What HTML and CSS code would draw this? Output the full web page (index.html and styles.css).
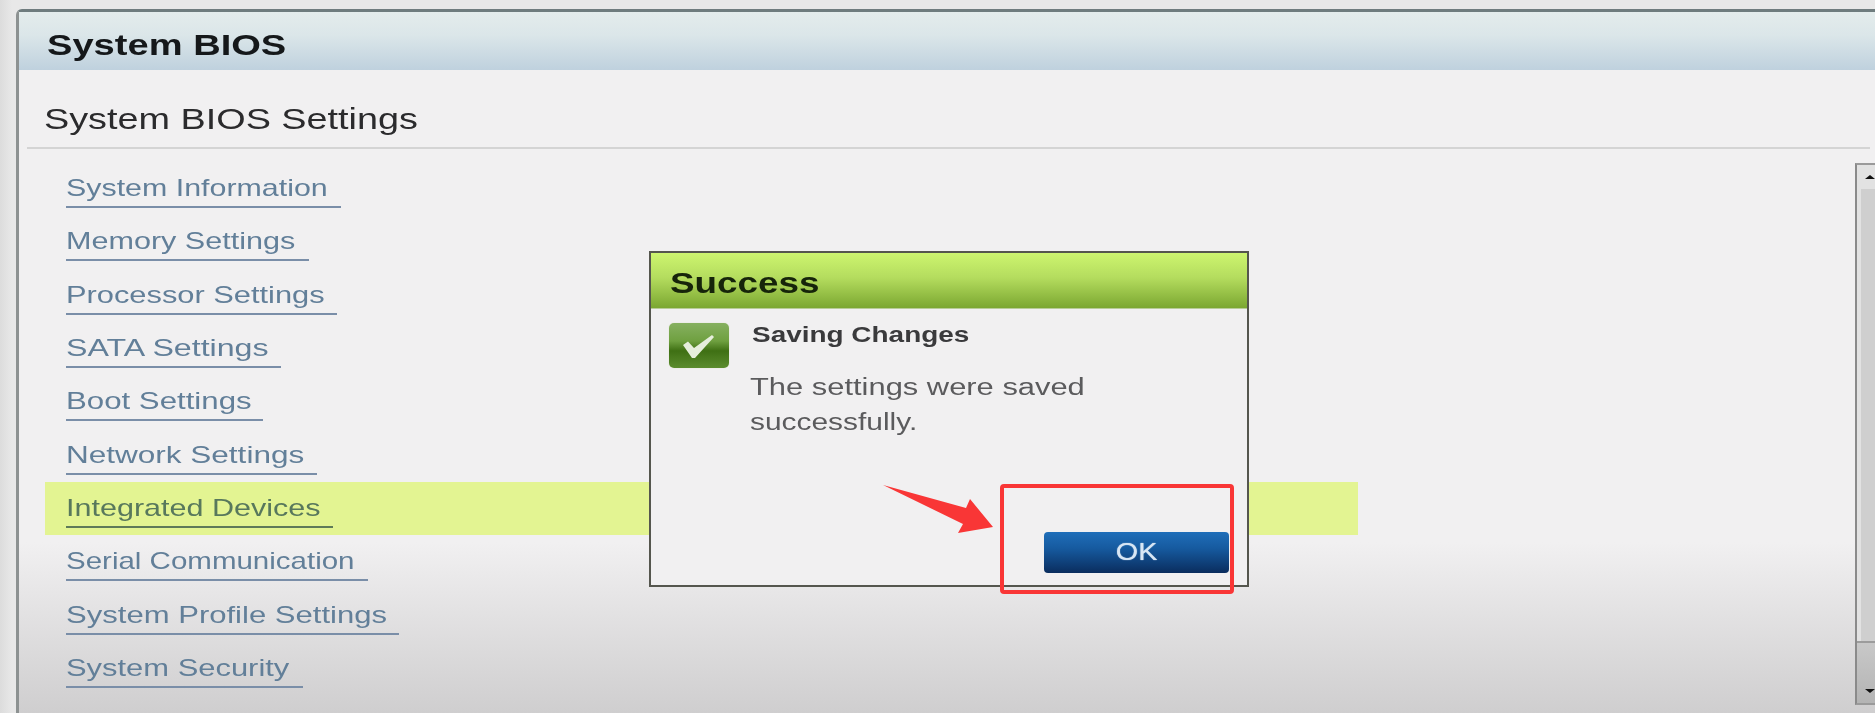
FILE: index.html
```html
<!DOCTYPE html>
<html lang="en">
<head>
    <meta charset="UTF-8">
    <meta name="viewport" content="width=device-width, initial-scale=1.0">
    <title>System BIOS</title>
    <link rel="stylesheet" href="styles.css">
</head>
<body>
    <div class="bios-panel">
        <div class="title-bar"><h1 class="stretch">System BIOS</h1></div>
        <h2 class="subtitle"><span class="stretch">System BIOS Settings</span></h2>

        <ul class="menu">
            <li><a href="#"><span class="stretch">System Information</span></a></li>
            <li><a href="#"><span class="stretch">Memory Settings</span></a></li>
            <li><a href="#"><span class="stretch">Processor Settings</span></a></li>
            <li><a href="#"><span class="stretch">SATA Settings</span></a></li>
            <li><a href="#"><span class="stretch">Boot Settings</span></a></li>
            <li><a href="#"><span class="stretch">Network Settings</span></a></li>
            <li class="selected"><a href="#"><span class="stretch">Integrated Devices</span></a></li>
            <li><a href="#"><span class="stretch">Serial Communication</span></a></li>
            <li><a href="#"><span class="stretch">System Profile Settings</span></a></li>
            <li><a href="#"><span class="stretch">System Security</span></a></li>
        </ul>

        <div class="scrollbar">
            <div class="scroll-btn"><span class="arrow-up"></span></div>
            <div class="scroll-track"></div>
            <div class="scroll-btn scroll-btn-bottom"><span class="arrow-down"></span></div>
        </div>
    </div>

    <div class="dialog">
        <div class="dialog-header"><span class="stretch">Success</span></div>
        <div class="dialog-body">
            <div class="check-icon">
                <svg width="32" height="24" viewBox="0 0 32 24">
                    <path d="M0 10 L5 6.5 L11 13 L29 0 L31 2 L12 23 L9 23 Z" fill="#e6eedc"/>
                </svg>
            </div>
            <div class="dialog-text">
                <h3><span class="stretch">Saving Changes</span></h3>
                <p><span class="stretch">The settings were saved</span><br><span class="stretch stretch-short">successfully.</span></p>
            </div>
        </div>
        <div class="dialog-footer">
            <button class="ok-button"><span class="stretch">OK</span></button>
        </div>
    </div>

    <!-- red annotation drawn on top of the screenshot -->
    <div class="red-box"></div>
    <svg class="red-arrow" width="120" height="60" viewBox="0 0 120 60">
        <path d="M2 1 L85 24 L89 15 L112 43 L77 49 L82 40 Z" fill="#f93636"/>
    </svg>
</body>
</html>
```

FILE: styles.css
```css
* {
    margin: 0;
    padding: 0;
    box-sizing: border-box;
}

html, body {
    height: 713px;
    overflow: hidden;
}

body {
    font-family: "Liberation Sans", Arial, sans-serif;
    background: linear-gradient(90deg, #dcdcdc 0, #e8e8e8 12px);
    padding: 9px 0 0 16px;
    position: relative;
}

.stretch {
    display: inline-block;
    transform-origin: left center;
    white-space: nowrap;
    filter: blur(0.5px);
}

.bios-panel {
    position: relative;
    height: 704px;
    border-left: 3px solid #8d9292;
    border-top: 3px solid #6f7c7e;
    border-top-left-radius: 6px;
    background: linear-gradient(180deg, #f1f0f1 0, #f1f0f1 530px, #cfcecf 100%);
}

.title-bar {
    height: 58px;
    padding: 7px 0 0 28px;
    display: flex;
    align-items: center;
    background: linear-gradient(180deg, #e4ecec 0%, #dbe6e9 40%, #bfd1de 100%);
}

.title-bar h1 {
    font-size: 30px;
    font-weight: 700;
    color: #15181a;
    transform: scaleX(1.27);
}

.subtitle {
    height: 79px;
    margin-left: 8px;
    margin-right: 5px;
    padding: 20px 0 0 17px;
    border-bottom: 2px solid #d4d4d4;
    display: flex;
    align-items: center;
    font-size: 30px;
    font-weight: 400;
    color: #2b2b2d;
}

.subtitle .stretch {
    transform: scaleX(1.26);
}

.menu {
    list-style: none;
    margin: 13px 0 0 26px;
    width: 1313px;
    display: grid;
    grid-auto-rows: 53.33px;
}

.menu li {
    padding-left: 21px;
}

.menu a {
    --sx: 1.27;
    display: block;
    height: 46px;
    padding-top: 9px;
    line-height: 34px;
    font-size: 24px;
    color: #627f99;
    text-decoration: none;
    border-bottom: 2px solid #7a8ea8;
}

.menu .stretch {
    transform: scaleX(var(--sx));
}

/* underline widths and text stretch measured per item */
.menu li:nth-child(1) a { width: 275px; --sx: 1.266; }
.menu li:nth-child(2) a { width: 243px; --sx: 1.273; }
.menu li:nth-child(3) a { width: 271px; --sx: 1.284; }
.menu li:nth-child(4) a { width: 215px; --sx: 1.34; }
.menu li:nth-child(5) a { width: 197px; --sx: 1.30; }
.menu li:nth-child(6) a { width: 251px; --sx: 1.313; }
.menu li:nth-child(7) a { width: 267px; --sx: 1.272; }
.menu li:nth-child(8) a { width: 302px; --sx: 1.229; }
.menu li:nth-child(9) a { width: 333px; --sx: 1.294; }
.menu li:nth-child(10) a { width: 237px; --sx: 1.288; }

.menu .selected {
    background: #e3f492;
}

.menu .selected a {
    color: #58785c;
    border-bottom-color: #5e7a58;
}

.scrollbar {
    position: absolute;
    top: 151px;
    right: 0;
    width: 20px;
    height: 542px;
    display: flex;
    flex-direction: column;
    border-left: 2px solid #8a8a8a;
    border-top: 2px solid #9a9a9a;
    border-bottom: 2px solid #9a9a9a;
    background: #e2e2e2;
}

.scroll-btn {
    height: 24px;
    display: flex;
    justify-content: center;
    align-items: center;
    padding-left: 8px;
}

.scroll-track {
    flex: 1;
    margin-left: 4px;
    background: #cfcfcf;
}

.scroll-btn-bottom {
    height: 62px;
    align-items: flex-end;
    padding-bottom: 10px;
    border-top: 2px solid #9c9c9c;
    background: linear-gradient(180deg, #c8c8c8, #b4b4b4);
}

.arrow-up {
    border-left: 5px solid transparent;
    border-right: 5px solid transparent;
    border-bottom: 4px solid #111;
}

.arrow-down {
    border-left: 5px solid transparent;
    border-right: 5px solid transparent;
    border-top: 4px solid #111;
}

.dialog {
    position: absolute;
    left: 649px;
    top: 251px;
    width: 600px;
    height: 336px;
    display: flex;
    flex-direction: column;
    border: 2px solid #55564e;
    background: #f1f0f1;
}

.dialog-header {
    height: 56px;
    padding: 6px 0 0 19px;
    display: flex;
    align-items: center;
    font-size: 29px;
    font-weight: 700;
    color: #16240a;
    background: linear-gradient(180deg, #cdf56f 0%, #b4dc5e 45%, #7ba731 100%);
    border-bottom: 1px solid #b8cc98;
}

.dialog-header .stretch {
    transform: scaleX(1.27);
}

.dialog-body {
    flex: 1;
    display: flex;
    padding: 12px 0 0 18px;
}

.check-icon {
    width: 60px;
    height: 45px;
    margin-top: 2px;
    padding-top: 2px;
    border-radius: 5px;
    display: flex;
    align-items: center;
    justify-content: center;
    background: linear-gradient(180deg, #86b060 0%, #6fa040 40%, #3f7014 62%, #5b8c2e 100%);
    box-shadow: 0 0 1px #c8d8a0;
}

.dialog-text {
    margin-left: 23px;
}

.dialog-text h3 {
    font-size: 22px;
    line-height: 28px;
    font-weight: 700;
    color: #3a3a3c;
}

.dialog-text h3 .stretch {
    transform: scaleX(1.27);
}

.dialog-text p {
    margin-top: 21px;
    margin-left: -2px;
    font-size: 23px;
    line-height: 35px;
    color: #5b5b5d;
}

.dialog-text p .stretch {
    transform: scaleX(1.343);
}

.dialog-text p .stretch-short {
    transform: scaleX(1.3);
}

.dialog-footer {
    display: flex;
    justify-content: flex-end;
    padding: 0 18px 12px 0;
}

.ok-button {
    width: 185px;
    height: 41px;
    border: none;
    border-radius: 4px;
    font-family: inherit;
    font-size: 23px;
    font-weight: 400;
    color: #d8e6f4;
    text-shadow: 0 0 1px #d8e6f4;
    background: linear-gradient(180deg, #1f6eb9 0%, #165a9f 40%, #0a2d5e 100%);
}

.ok-button .stretch {
    transform: scaleX(1.25);
    transform-origin: center;
}

.red-box {
    position: absolute;
    left: 1000px;
    top: 484px;
    width: 234px;
    height: 110px;
    border: 4px solid #f93636;
    border-radius: 4px;
}

.red-arrow {
    position: absolute;
    left: 881px;
    top: 484px;
}
```
